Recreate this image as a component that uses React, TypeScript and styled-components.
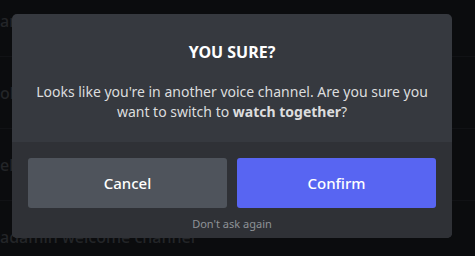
import React from "react";
import styled, { createGlobalStyle } from "styled-components";

const Global = createGlobalStyle`
  html, body { margin: 0; padding: 0; background: #0b0c0e; }
  body { font-family: "Noto Sans", "Open Sans", sans-serif; overflow: hidden; }
  * { box-sizing: border-box; }
`;

const Page = styled.div`
  position: relative;
  width: 475px;
  height: 256px;
  overflow: hidden;
  background: #0b0c0e;
`;

const BgList = styled.div`
  display: flex;
  flex-direction: column;
  margin-top: -15px;
`;

const BgRow = styled.div`
  height: 72px;
  display: flex;
  align-items: center;
  gap: 40px;
  border-bottom: 1px solid #111215;
  color: #232528;
  font-size: 16px;
  font-weight: 500;
  white-space: nowrap;
`;

const Modal = styled.div`
  position: absolute;
  left: 12px;
  top: 14px;
  width: 440px;
  height: 224px;
  border-radius: 5px;
  overflow: hidden;
  display: flex;
  flex-direction: column;
  background: #36393f;
`;

const Header = styled.div`
  height: 128px;
  display: flex;
  flex-direction: column;
  align-items: center;
  padding: 28px 16px 0;
  text-align: center;
`;

const Title = styled.h2`
  margin: 0;
  color: #ffffff;
  font-size: 16px;
  font-weight: 700;
  line-height: 20px;
  text-transform: uppercase;
`;

const Body = styled.p`
  margin: 20px 0 0;
  display: flex;
  flex-direction: column;
  align-items: center;
  color: #dcddde;
  font-size: 14px;
  line-height: 20px;
  strong { font-weight: 700; }
`;

const Line = styled.span`
  white-space: nowrap;
`;

const Footer = styled.div`
  flex: 1;
  background: #2f3136;
  display: flex;
  flex-direction: column;
  align-items: center;
  padding: 16px 16px 0;
`;

const Buttons = styled.div`
  display: flex;
  gap: 10px;
  width: 100%;
`;

const Button = styled.button<{ $primary?: boolean }>`
  flex: 1;
  height: 50px;
  border: none;
  border-radius: 3px;
  background: ${(p) => (p.$primary ? "#5865f2" : "#4f545c")};
  color: #ffffff;
  font-family: inherit;
  font-size: 15px;
  font-weight: 500;
  cursor: pointer;
`;

const Skip = styled.button`
  margin-top: 8px;
  border: none;
  background: none;
  padding: 0;
  color: #8e9297;
  font-family: inherit;
  font-size: 11px;
  line-height: 16px;
  cursor: pointer;
`;

export default function App() {
  return (
    <Page>
      <Global />
      <BgList>
        <BgRow>
          <span>ame&nbsp;&nbsp;&nbsp;&nbsp;&nbsp;&nbsp;&nbsp;Ladill</span>
        </BgRow>
        <BgRow>
          <span>ob</span>
        </BgRow>
        <BgRow>
          <span>elo</span>
        </BgRow>
        <BgRow>
          <span>adamin welcome channel</span>
        </BgRow>
      </BgList>
      <Modal>
        <Header>
          <Title>You sure?</Title>
          <Body>
            <Line>Looks like you're in another voice channel. Are you sure you</Line>
            <Line>
              want to switch to <strong>watch together</strong>?
            </Line>
          </Body>
        </Header>
        <Footer>
          <Buttons>
            <Button>Cancel</Button>
            <Button $primary>Confirm</Button>
          </Buttons>
          <Skip>Don't ask again</Skip>
        </Footer>
      </Modal>
    </Page>
  );
}
